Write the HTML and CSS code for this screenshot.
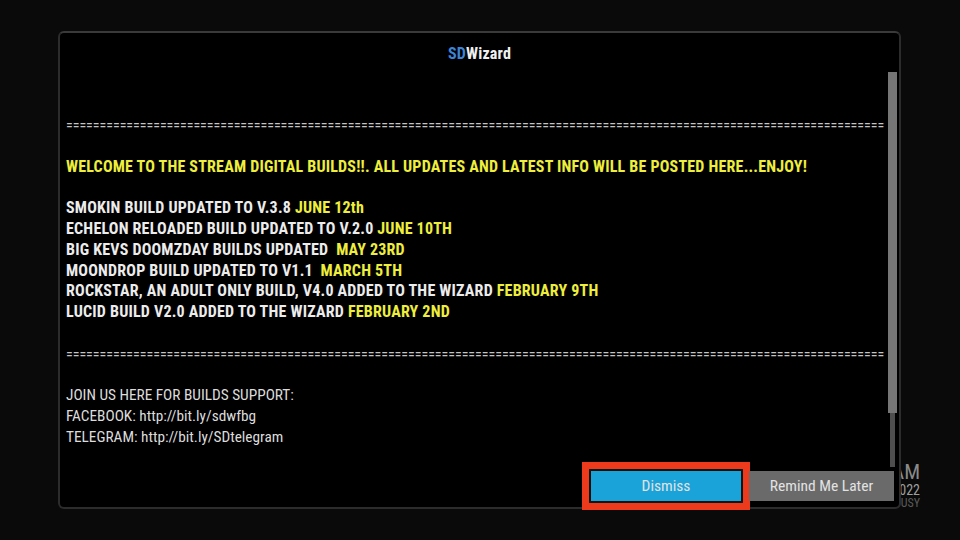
FILE: index.html
```html
<!DOCTYPE html>
<html lang="en">
<head>
  <meta charset="UTF-8">
  <meta name="viewport" content="width=device-width, initial-scale=1.0">
  <title>SDWizard</title>
  <link rel="stylesheet" href="styles.css">
</head>
<body>
  <div class="clock">
    <div class="clock-time">9:41 AM</div>
    <div class="clock-date">6/14/2022</div>
    <div class="clock-status">BUSY</div>
  </div>

  <div class="dialog">
    <div class="dialog-header">
      <span class="brand">SD</span>Wizard
    </div>

    <div class="dialog-body">
      <div class="text-box">
        <div class="sep">==================================================================================================================================================================</div>
        <div class="line yellow">WELCOME TO THE STREAM DIGITAL BUILDS!!. ALL UPDATES AND LATEST INFO WILL BE POSTED HERE...ENJOY!</div>
        <div class="group">
          <div class="line">SMOKIN BUILD UPDATED TO V.3.8 <span class="yellow">JUNE 12th</span></div>
          <div class="line">ECHELON RELOADED BUILD UPDATED TO V.2.0 <span class="yellow">JUNE 10TH</span></div>
          <div class="line">BIG KEVS DOOMZDAY BUILDS UPDATED  <span class="yellow">MAY 23RD</span></div>
          <div class="line">MOONDROP BUILD UPDATED TO V1.1  <span class="yellow">MARCH 5TH</span></div>
          <div class="line">ROCKSTAR, AN ADULT ONLY BUILD, V4.0 ADDED TO THE WIZARD <span class="yellow">FEBRUARY 9TH</span></div>
          <div class="line">LUCID BUILD V2.0 ADDED TO THE WIZARD <span class="yellow">FEBRUARY 2ND</span></div>
        </div>
        <div class="sep">==================================================================================================================================================================</div>
        <div class="group support">
          <div class="line">JOIN US HERE FOR BUILDS SUPPORT:</div>
          <div class="line">FACEBOOK: http://bit.ly/sdwfbg</div>
          <div class="line">TELEGRAM: http://bit.ly/SDtelegram</div>
        </div>
      </div>

      <div class="scrollbar">
        <div class="scroll-thumb"></div>
      </div>
    </div>

    <div class="dialog-footer">
      <button class="btn btn-focus">Dismiss</button>
      <button class="btn">Remind Me Later</button>
    </div>
  </div>
</body>
</html>
```
FILE: styles.css
```css
* {
  box-sizing: border-box;
  margin: 0;
  padding: 0;
}
body {
  font-family: 'Roboto Condensed', Roboto, 'DejaVu Sans Condensed', sans-serif;
  background-color: #0a0a0a;
  width: 960px;
  height: 540px;
  overflow: hidden;
  position: relative;
  padding: 31px 0 0 58px;
}

/* clock of the home screen, mostly hidden behind the dialog */
.clock {
  position: absolute;
  right: 40px;
  top: 462px;
  text-align: right;
  color: #8a8a8a;
  line-height: 1;
}
.clock-time {
  font-size: 21px;
}
.clock-date {
  font-size: 14px;
  color: #a0a0a0;
}
.clock-status {
  font-size: 12px;
  color: #5a5a5a;
}

.dialog {
  position: relative;
  z-index: 1;
  width: 843px;
  height: 478px;
  background: #000;
  border: 2px solid #2c2c2c;
  border-top-color: #3a3a3a;
  border-radius: 6px;
  display: flex;
  flex-direction: column;
}
.dialog-header {
  height: 39px;
  padding-top: 11px;
  text-align: center;
  font-size: 16px;
  font-weight: bold;
  line-height: 20px;
  color: #f0f0f0;
  letter-spacing: 0.2px;
}
.brand {
  color: #3d84d6;
}

.dialog-body {
  height: 395px;
  display: flex;
}
.text-box {
  flex: 1;
  padding: 43px 0 0 6px;
  font-size: 16px;
  font-weight: bold;
  letter-spacing: 0.2px;
  line-height: 20.8px;
  color: #ececec;
  overflow: hidden;
}
.line {
  height: 20.8px;
  white-space: pre;
}
.yellow {
  color: #eeee3c;
}
.group {
  margin-top: 20.8px;
}
.sep {
  height: 20.8px;
  margin-top: 20.8px;
  font-size: 14px;
  font-weight: normal;
  letter-spacing: 0;
  color: #c4c4c4;
  white-space: nowrap;
  overflow: hidden;
  width: 820px;
}
.text-box > .sep:first-child {
  margin-top: 0;
}
.text-box > .line {
  margin-top: 20.8px;
}
.support {
  font-size: 15.3px;
  font-weight: normal;
  letter-spacing: 0;
  color: #dcdcdc;
}

.scrollbar {
  width: 9px;
  margin: 0 2px 0 3px;
  display: flex;
  flex-direction: column;
  align-items: center;
  background: linear-gradient(#4e4e4e, #4e4e4e) center / 5px 100% no-repeat;
}
.scroll-thumb {
  width: 9px;
  height: 341px;
  background: #767676;
}

.dialog-footer {
  flex: 1;
  display: flex;
  justify-content: flex-end;
  align-items: center;
  gap: 6px;
  padding: 0 5px 2px 0;
}
.btn {
  font-family: inherit;
  font-size: 15.5px;
  color: #e2e2e2;
  height: 30px;
  width: 145px;
  border: none;
  background: #6a6a6a;
}
.btn-focus {
  width: 154px;
  height: 34px;
  border: 2px solid #151515;
  background: #1aa3d9;
  outline: 7px solid #ee3a1c;
}
```
